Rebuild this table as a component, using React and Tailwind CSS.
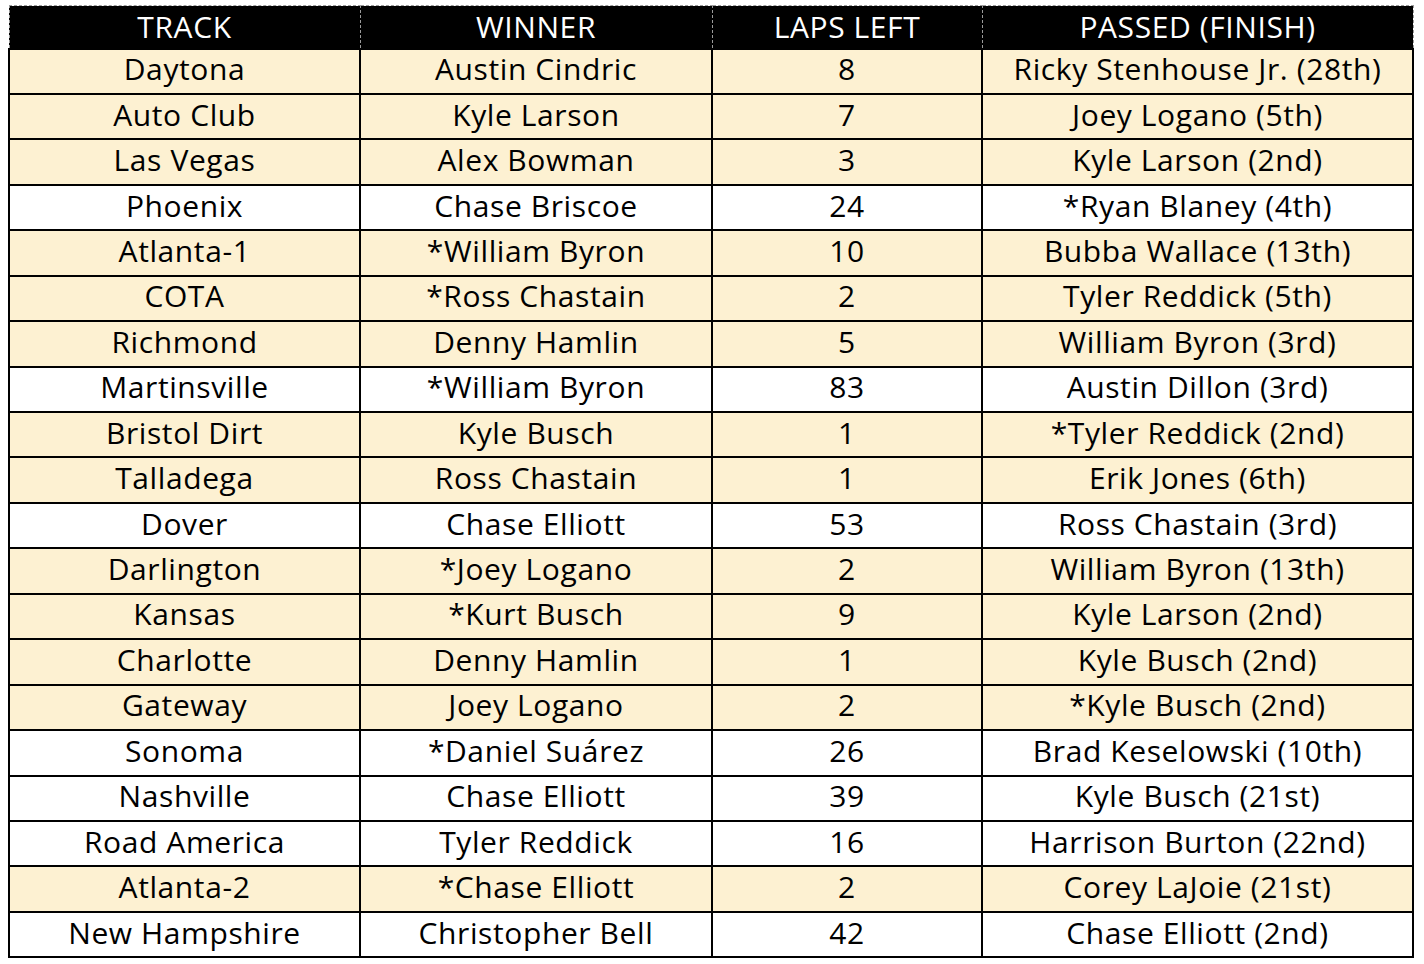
const rows = [
  ['Daytona', 'Austin Cindric', '8', 'Ricky Stenhouse Jr. (28th)', true],
  ['Auto Club', 'Kyle Larson', '7', 'Joey Logano (5th)', true],
  ['Las Vegas', 'Alex Bowman', '3', 'Kyle Larson (2nd)', true],
  ['Phoenix', 'Chase Briscoe', '24', '*Ryan Blaney (4th)', false],
  ['Atlanta-1', '*William Byron', '10', 'Bubba Wallace (13th)', true],
  ['COTA', '*Ross Chastain', '2', 'Tyler Reddick (5th)', true],
  ['Richmond', 'Denny Hamlin', '5', 'William Byron (3rd)', true],
  ['Martinsville', '*William Byron', '83', 'Austin Dillon (3rd)', false],
  ['Bristol Dirt', 'Kyle Busch', '1', '*Tyler Reddick (2nd)', true],
  ['Talladega', 'Ross Chastain', '1', 'Erik Jones (6th)', true],
  ['Dover', 'Chase Elliott', '53', 'Ross Chastain (3rd)', false],
  ['Darlington', '*Joey Logano', '2', 'William Byron (13th)', true],
  ['Kansas', '*Kurt Busch', '9', 'Kyle Larson (2nd)', true],
  ['Charlotte', 'Denny Hamlin', '1', 'Kyle Busch (2nd)', true],
  ['Gateway', 'Joey Logano', '2', '*Kyle Busch (2nd)', true],
  ['Sonoma', '*Daniel Suárez', '26', 'Brad Keselowski (10th)', false],
  ['Nashville', 'Chase Elliott', '39', 'Kyle Busch (21st)', false],
  ['Road America', 'Tyler Reddick', '16', 'Harrison Burton (22nd)', false],
  ['Atlanta-2', '*Chase Elliott', '2', 'Corey LaJoie (21st)', true],
  ['New Hampshire', 'Christopher Bell', '42', 'Chase Elliott (2nd)', false],
];

const headers = ['TRACK', 'WINNER', 'LAPS LEFT', 'PASSED (FINISH)'];

export default function App() {
  return (
    <div className="min-h-screen bg-white pl-[8px] pt-[5px] font-['Open_Sans','Liberation_Sans',sans-serif]">
      <table className="border-collapse text-[30px] leading-none tracking-[0.6px] text-black">
        <colgroup>
          <col className="w-[351px]" />
          <col className="w-[352px]" />
          <col className="w-[270px]" />
          <col className="w-[431px]" />
        </colgroup>
        <thead>
          <tr className="h-[43px] bg-black">
            {headers.map((h) => (
              <th
                key={h}
                className="border border-dashed border-[#9a9a9a] p-0 pt-[1px] text-center font-normal text-white"
              >
                {h}
              </th>
            ))}
          </tr>
        </thead>
        <tbody>
          {rows.map(([track, winner, laps, passed, cream]) => (
            <tr key={track} className={`h-[45.45px] ${cream ? 'bg-[#fdf1d2]' : 'bg-white'}`}>
              {[track, winner, laps, passed].map((v, i) => (
                <td key={i} className="border-2 border-black p-0 pb-[4px] text-center">
                  {v}
                </td>
              ))}
            </tr>
          ))}
        </tbody>
      </table>
    </div>
  );
}
